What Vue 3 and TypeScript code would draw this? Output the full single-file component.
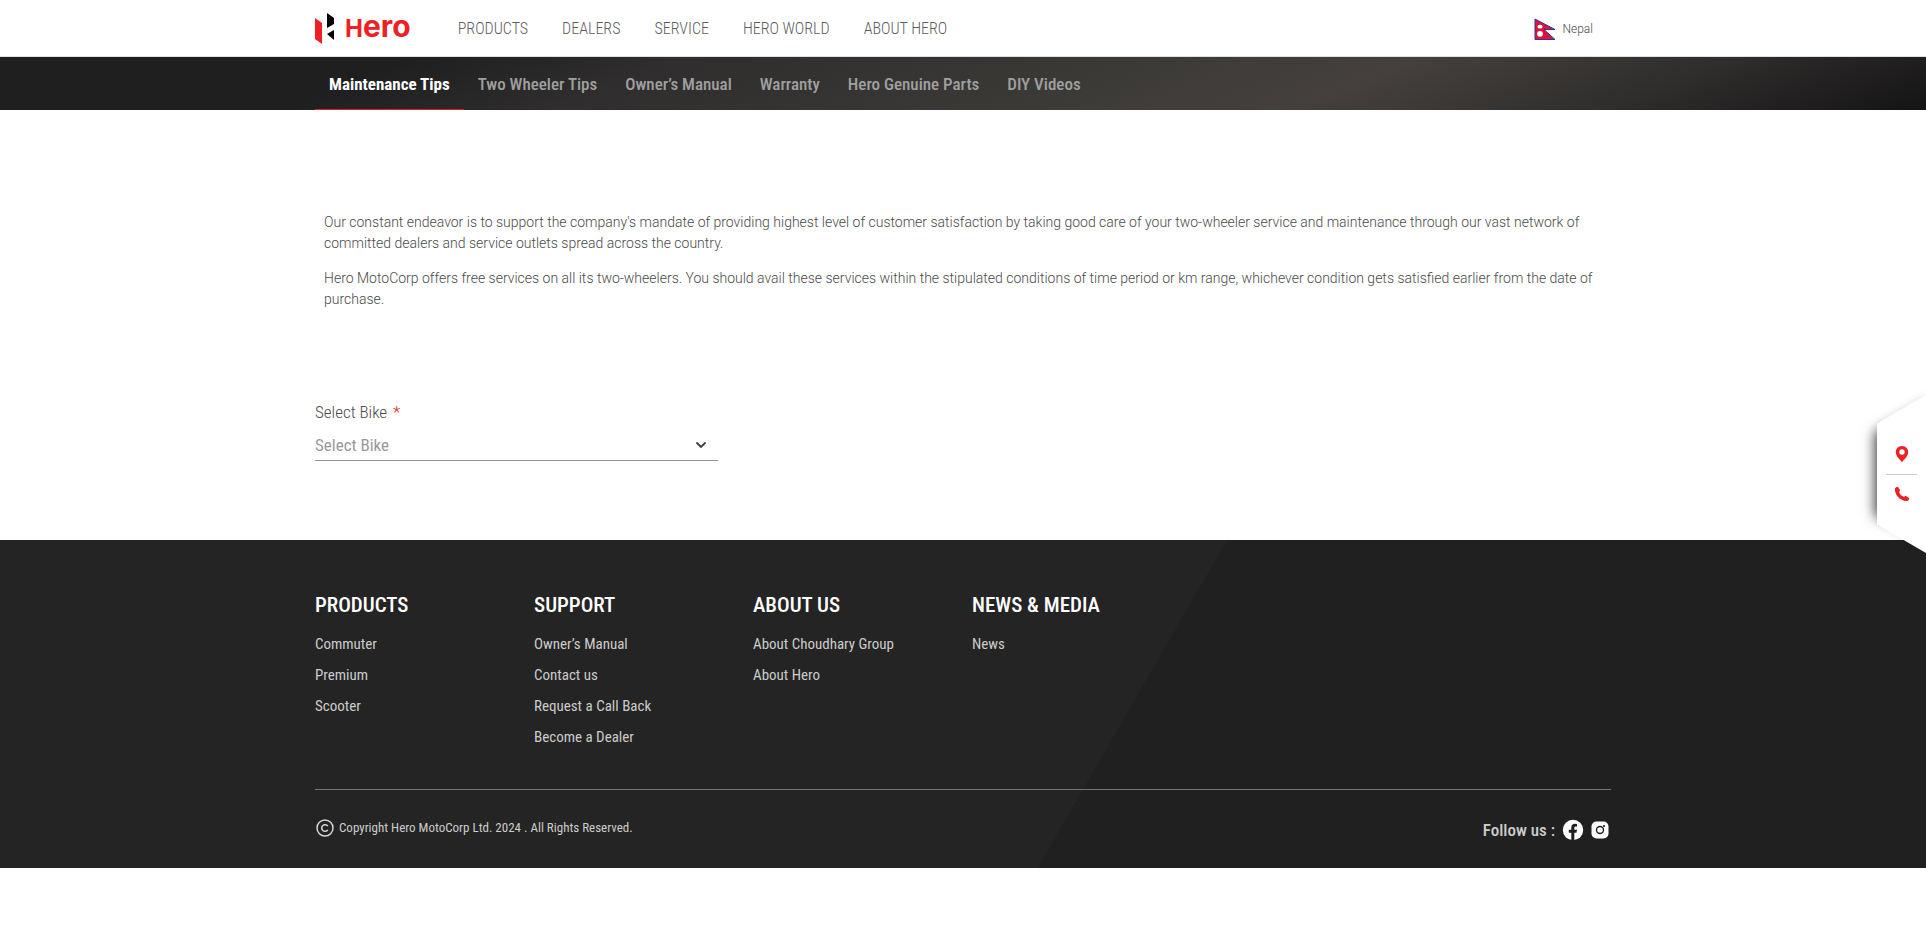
<script setup lang="ts">
import { ref } from 'vue'

interface FooterColumn {
  title: string
  links: string[]
}

const mainNav: string[] = ['PRODUCTS', 'DEALERS', 'SERVICE', 'HERO WORLD', 'ABOUT HERO']
const subNav: string[] = [
  'Maintenance Tips',
  'Two Wheeler Tips',
  'Owner’s Manual',
  'Warranty',
  'Hero Genuine Parts',
  'DIY Videos',
]
const activeTab = ref<string>('Maintenance Tips')
const bike = ref<string>('')

const footerColumns: FooterColumn[] = [
  { title: 'PRODUCTS', links: ['Commuter', 'Premium', 'Scooter'] },
  { title: 'SUPPORT', links: ['Owner’s Manual', 'Contact us', 'Request a Call Back', 'Become a Dealer'] },
  { title: 'ABOUT US', links: ['About Choudhary Group', 'About Hero'] },
  { title: 'NEWS & MEDIA', links: ['News'] },
]
</script>

<template>
  <div class="page">
    <header class="header">
      <div class="container header-row">
        <a href="#" class="logo">
          <svg class="logo-mark" viewBox="0 0 20 31" aria-hidden="true">
            <path d="M0 5 L7 10 V31 L0 26 Z" fill="#ed2024" />
            <path d="M12 0 L19 5 V11 L12 15 Z" fill="#000" />
            <path d="M12 21 L19 17 V27 Z" fill="#000" />
          </svg>
          <span class="logo-word"><span class="logo-cap">H</span>ero</span>
        </a>
        <nav class="main-nav">
          <a v-for="item in mainNav" :key="item" href="#">{{ item }}</a>
        </nav>
        <button type="button" class="country">
          <svg class="flag" viewBox="0 0 22 22" aria-hidden="true">
            <path d="M1 1 L21 11.500 H10 L21 21.500 H1 Z" fill="#dc143c" stroke="#2b3990" stroke-width="1" />
            <ellipse cx="6" cy="8.700" rx="2.600" ry="1.900" fill="#fff" />
            <circle cx="6" cy="15.800" r="2.900" fill="#fff" />
          </svg>
          <span>Nepal</span>
        </button>
      </div>
    </header>

    <nav class="sub-nav">
      <div class="container sub-row">
        <a
          v-for="item in subNav"
          :key="item"
          href="#"
          :class="{ active: item === activeTab }"
          @click.prevent="activeTab = item"
          >{{ item }}</a
        >
      </div>
    </nav>

    <main class="container main">
      <section class="intro">
        <p>
          Our constant endeavor is to support the company's mandate of providing highest level of customer
          satisfaction by taking good care of your two-wheeler service and maintenance through our vast network of
          committed dealers and service outlets spread across the country.
        </p>
        <p>
          Hero MotoCorp offers free services on all its two-wheelers. You should avail these services within the
          stipulated conditions of time period or km range, whichever condition gets satisfied earlier from the date
          of purchase.
        </p>
      </section>

      <form class="field">
        <label for="bike">Select Bike <span class="required">*</span></label>
        <div class="select-wrap">
          <select id="bike" v-model="bike">
            <option value="">Select Bike</option>
          </select>
          <svg class="chevron" viewBox="0 0 12 8" aria-hidden="true">
            <path d="M2 2 L6 6 L10 2" fill="none" stroke="#3b3d45" stroke-width="1.800" stroke-linecap="round" />
          </svg>
        </div>
      </form>
    </main>

    <footer class="footer">
      <div class="container">
        <div class="columns">
          <section v-for="col in footerColumns" :key="col.title" class="column">
            <h2>{{ col.title }}</h2>
            <ul>
              <li v-for="link in col.links" :key="link">
                <a href="#">{{ link }}</a>
              </li>
            </ul>
          </section>
        </div>
        <div class="bottom">
          <div class="copyright">
            <svg class="copy-icon" viewBox="0 0 18 18" aria-hidden="true">
              <circle cx="9" cy="9" r="8" fill="none" stroke="#d6d6d6" stroke-width="1.500" />
              <path
                d="M11.800 7.200 A3.300 3.300 0 1 0 11.800 10.800"
                fill="none"
                stroke="#d6d6d6"
                stroke-width="1.500"
              />
            </svg>
            <span>Copyright Hero MotoCorp Ltd. 2024 . All Rights Reserved.</span>
          </div>
          <div class="social">
            <span>Follow us :</span>
            <a href="#" aria-label="Facebook">
              <svg class="facebook" viewBox="0 0 22 22" aria-hidden="true">
                <circle cx="11" cy="11" r="10.200" fill="#fff" />
                <path
                  d="M9.300 22 V13.800 H6.800 V10.800 H9.300 V8.600 C9.300 6 10.800 4.700 13 4.700 L15 4.900 V7.400 H13.800 C12.700 7.400 12.300 8 12.300 8.800 V10.800 H15 L14.500 13.800 H12.300 V22 Z"
                  fill="#202020"
                />
              </svg>
            </a>
            <a href="#" aria-label="Instagram">
              <svg class="instagram" viewBox="0 0 18 18" aria-hidden="true">
                <rect x="0.500" y="0.500" width="17" height="17" rx="5" fill="#fff" />
                <circle cx="9" cy="9" r="3.500" fill="none" stroke="#202020" stroke-width="1.400" />
                <circle cx="13" cy="5" r="1.100" fill="#202020" />
              </svg>
            </a>
          </div>
        </div>
      </div>
    </footer>

    <aside class="quick">
      <div class="quick-shape"></div>
      <div class="quick-links">
        <a href="#" aria-label="Find a dealer">
          <svg class="quick-icon" viewBox="0 0 16 18" aria-hidden="true">
            <path
              fill-rule="evenodd"
              d="M8 1 C4.300 1 1.800 3.800 1.800 7 C1.800 11 5.500 14 8 17.300 C10.500 14 14.200 11 14.200 7 C14.200 3.800 11.700 1 8 1 Z M8 4.300 A2.700 2.700 0 1 1 8 9.700 A2.700 2.700 0 1 1 8 4.300 Z"
              fill="#ed2024"
            />
          </svg>
        </a>
        <a href="#" aria-label="Call us">
          <svg class="quick-icon" viewBox="0 0 16 18" aria-hidden="true">
            <path
              d="M1 2.500 C1.500 1.200 3 0.600 4 1 L6 4 C6.300 4.700 5.400 5.400 5.200 6.200 C6 8.200 7.500 9.800 9.500 10.800 C10.500 10.700 11.200 9.800 12 10 L15 12 C15.500 13.200 14.500 14.500 13.200 14.900 C7 15.500 0.200 9 1 2.500 Z"
              fill="#ed2024"
            />
          </svg>
        </a>
      </div>
    </aside>
  </div>
</template>

<style>
body {
  margin: 0;
  background: #fff;
}
</style>

<style scoped>
.page {
  font-family: 'Roboto Condensed', Roboto, 'Liberation Sans Narrow', sans-serif;
  color: #4a4a4a;
}
a {
  color: inherit;
  text-decoration: none;
}
svg {
  display: block;
}
.container {
  width: 1296px;
  max-width: 100%;
  margin: 0 auto;
}
.header {
  border-bottom: 1px solid #dde2de;
}
.header-row {
  display: flex;
  align-items: center;
  height: 56px;
}
.logo {
  display: flex;
  align-items: center;
  gap: 10px;
  margin-right: 47px;
}
.logo-mark {
  width: 20px;
  height: 31px;
}
.logo-word {
  font: 700 30px/30px Inter, sans-serif;
  color: #ed2024;
  padding-bottom: 1px;
}
.logo-cap {
  font-size: 24px;
}
.main-nav {
  display: flex;
  gap: 34px;
  flex: 1;
  padding-top: 1px;
  font-size: 16px;
  font-weight: 300;
  color: #5c5c5c;
}
.country {
  display: flex;
  align-items: center;
  gap: 6px;
  padding: 1px 0 0;
  margin-right: 18px;
  border: 0;
  background: none;
  font: 300 12px/16px Roboto, sans-serif;
  color: #4a4a4a;
}
.flag {
  width: 22px;
  height: 22px;
}
.sub-nav {
  background: linear-gradient(
    158deg,
    #1f1f1f 0%,
    #1f1f1f 20%,
    #2f2d2d 33%,
    #3a3936 54%,
    #45403e 69%,
    #2e2d2b 85%,
    #242222 91%,
    #151414 100%
  );
}
.sub-row {
  display: flex;
  font-size: 17px;
  font-weight: 500;
  line-height: 50px;
  color: #a0a0a0;
}
.sub-row a {
  padding: 2px 14px 0;
  border-bottom: 1px solid transparent;
}
.sub-row .active {
  font-weight: 700;
  color: #fff;
  border-bottom-color: #d8232a;
}
.main {
  padding: 95px 0 79px;
}
.intro {
  padding: 7px 9px 0;
  font: 300 14px/21px Roboto, sans-serif;
}
.intro p {
  margin: 0 0 14px;
}
.field {
  display: flex;
  flex-direction: column;
  width: 403px;
  max-width: 100%;
  margin-top: 91px;
  font-size: 17px;
  font-weight: 300;
}
.field label {
  line-height: 22px;
}
.required {
  margin-left: 2px;
  color: #ed2024;
}
.select-wrap {
  display: grid;
  align-items: center;
  border-bottom: 1px solid #949494;
  margin-top: 6px;
}
.select-wrap > * {
  grid-area: 1 / 1;
}
.select-wrap select {
  appearance: none;
  height: 31px;
  padding: 0;
  border: 0;
  border-radius: 0;
  background: none;
  font: inherit;
  font-weight: 400;
  color: #999;
}
.chevron {
  width: 12px;
  height: 8px;
  margin-right: 11px;
  justify-self: end;
  pointer-events: none;
}
.footer {
  padding: 52px 0 27px;
  background: linear-gradient(120deg, #242424 58%, #202020 58%);
  color: #ccc;
}
.columns {
  display: grid;
  grid-template-columns: repeat(4, 219px);
  padding-bottom: 36px;
  border-bottom: 1px solid #757575;
}
.column h2 {
  margin: 0 0 11px;
  font-size: 21px;
  line-height: 26px;
  font-weight: 500;
  color: #fff;
}
.column ul {
  margin: 0;
  padding: 0;
  list-style: none;
}
.column li {
  line-height: 31px;
  font-size: 15px;
}
.bottom {
  display: flex;
  justify-content: space-between;
  align-items: flex-start;
  padding-top: 29px;
}
.copyright {
  display: flex;
  align-items: center;
  gap: 5px;
  padding-left: 1px;
  font-size: 13px;
  line-height: 18px;
}
.copy-icon {
  width: 18px;
  height: 18px;
}
.social {
  display: flex;
  align-items: center;
  gap: 7px;
  padding-right: 2px;
  font-size: 17px;
  line-height: 22px;
  font-weight: 500;
}
.facebook {
  width: 22px;
  height: 22px;
}
.instagram {
  width: 18px;
  height: 18px;
}
.quick {
  position: fixed;
  right: 0;
  top: 395px;
  width: 49px;
  height: 158px;
  filter: drop-shadow(-1px -1px 3px rgba(0, 0, 0, 0.1));
}
.quick::before {
  content: '';
  position: absolute;
  inset: 36px 0;
  box-shadow: -2px 0 12px rgba(0, 0, 0, 0.7);
}
.quick-shape {
  position: absolute;
  inset: 0;
  background: #fff;
  clip-path: polygon(100% 0, 100% 100%, 0 82%, 0 18%);
}
.quick-links {
  position: relative;
  display: flex;
  flex-direction: column;
  padding: 39px 9px 0;
}
.quick-links a {
  display: flex;
  align-items: center;
  justify-content: center;
  height: 40px;
}
.quick-links a + a {
  border-top: 1px solid #ccc;
}
.quick-icon {
  width: 16px;
  height: 18px;
}
</style>
